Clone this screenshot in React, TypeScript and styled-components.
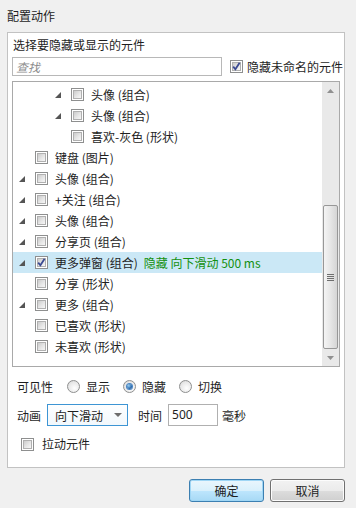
import React from 'react'
import styled, { createGlobalStyle } from 'styled-components'

const GlobalStyle = createGlobalStyle`
  body {
    margin: 0;
    background: #f0f0f0;
    font-family: "Noto Sans CJK SC", "Noto Sans", sans-serif;
    font-size: 12px;
    color: #1e1e1e;
  }
`

const Dialog = styled.div`
  width: 356px;
  height: 508px;
  box-sizing: border-box;
  display: flex;
  flex-direction: column;
`

const Title = styled.div`
  height: 32px;
  line-height: 32px;
  padding-left: 7px;
`

const Panel = styled.div`
  margin: 0 11px 0 7px;
  height: 436px;
  box-sizing: border-box;
  background: #fff;
  border: 1px solid #c2c2c2;
  padding: 3px 4px 0 4px;
  display: flex;
  flex-direction: column;
`

const Label = styled.div`
  line-height: 18px;
  height: 18px;
  padding-left: 1px;
`

const SearchRow = styled.div`
  display: flex;
  align-items: center;
  margin-top: 3px;
  height: 19px;
  white-space: nowrap;
`

const SearchInput = styled.div`
  width: 210px;
  height: 19px;
  flex-shrink: 0;
  box-sizing: border-box;
  border: 1px solid #b8b8b8;
  color: #8d8d8d;
  font-style: italic;
  padding-left: 3px;
  line-height: 17px;
`

const CheckLabel = styled.label<{ $gap?: number }>`
  display: flex;
  align-items: center;
  gap: ${p => p.$gap ?? 5}px;
  line-height: 16px;
  white-space: nowrap;
  flex-shrink: 0;
`

const BoxWrap = styled.span`
  width: 13px;
  height: 13px;
  box-sizing: border-box;
  border: 1px solid #8e8f8f;
  background: #fff;
  padding: 1px;
  display: inline-flex;
  flex-shrink: 0;
`

const BoxInner = styled.span`
  flex: 1;
  background: linear-gradient(135deg, #cbcbcb 0%, #e6e6e6 55%, #f6f6f6 100%);
  border: 1px solid #b0b0b0;
  position: relative;
`

const Check = ({ checked }: { checked?: boolean }) => (
  <BoxWrap>
    <BoxInner>
      {checked && (
        <svg width="11" height="11" viewBox="0 0 11 11" style={{ position: 'absolute', left: -2, top: -2 }}>
          <path d="M2.2 5.6 L4.4 8.3 L8.6 1.8" fill="none" stroke="#3b4a92" strokeWidth="1.8" />
        </svg>
      )}
    </BoxInner>
  </BoxWrap>
)

const TreeBox = styled.div`
  margin-top: 5px;
  height: 286px;
  box-sizing: border-box;
  border: 1px solid #a9a9a9;
  display: flex;
`

const List = styled.div`
  flex: 1;
  padding-top: 2px;
  overflow: hidden;
`

const Row = styled.div<{ $level: number; $selected?: boolean }>`
  height: 21px;
  display: flex;
  align-items: center;
  padding-left: ${p => 22 + p.$level * 18}px;
  background: ${p => (p.$selected ? '#cbe8f6' : 'transparent')};
  position: relative;
  white-space: nowrap;
`

const Expander = styled.svg`
  position: absolute;
  margin-left: -16px;
`

const RowText = styled.span`
  margin-left: 7px;
  line-height: 16px;
`

const Note = styled.span`
  margin-left: 6px;
  color: #14900f;
  line-height: 16px;
`

const ScrollBar = styled.div`
  width: 17px;
  background: #e9e9e9;
  display: flex;
  flex-direction: column;
  align-items: center;
`

const ArrowCell = styled.div`
  height: 17px;
  width: 17px;
  display: flex;
  align-items: center;
  justify-content: center;
`

const Thumb = styled.div`
  margin-top: auto;
  width: 15px;
  height: 144px;
  box-sizing: border-box;
  border: 1px solid #979797;
  border-radius: 2px;
  background: linear-gradient(90deg, #f4f4f4 0%, #e6e6e6 50%, #d5d5d5 100%);
  display: flex;
  align-items: center;
  justify-content: center;
`

const Grip = styled.div`
  width: 7px;
  height: 7px;
  background: repeating-linear-gradient(180deg, #6e6e6e 0 1px, transparent 1px 2px);
`

const Options = styled.div`
  padding: 9px 0 0 5px;
  display: flex;
  flex-direction: column;
`

const OptionRow = styled.div<{ $h: number; $mt?: number }>`
  display: flex;
  align-items: center;
  height: ${p => p.$h}px;
  margin-top: ${p => p.$mt ?? 0}px;
`

const Radio = styled.span<{ $on?: boolean }>`
  width: 13px;
  height: 13px;
  box-sizing: border-box;
  border-radius: 50%;
  border: 1px solid #8e8f8f;
  background: radial-gradient(circle at 60% 65%, #ffffff 0%, #e8e8e8 60%, #d0d0d0 100%);
  display: inline-flex;
  align-items: center;
  justify-content: center;
  &::after {
    content: '';
    display: ${p => (p.$on ? 'block' : 'none')};
    width: 5px;
    height: 5px;
    border-radius: 50%;
    background: radial-gradient(circle at 35% 35%, #9ad0f2 0%, #2a6cb0 60%, #1b3f77 100%);
    box-shadow: 0 0 0 1px #4a86c5;
  }
`

const RadioOption = styled.label`
  display: flex;
  align-items: center;
  gap: 6px;
  margin-left: 14px;
  & + & {
    margin-left: 13px;
  }
`

const Select = styled.div`
  margin-left: 6px;
  width: 81px;
  height: 22px;
  box-sizing: border-box;
  border: 1px solid #3d95d4;
  background: linear-gradient(180deg, #fdfeff 0%, #f2f8fc 100%);
  display: flex;
  align-items: center;
  padding-left: 7px;
`

const SelectArrow = styled.span`
  margin-left: auto;
  margin-right: 5px;
  width: 0;
  height: 0;
  border-left: 4px solid transparent;
  border-right: 4px solid transparent;
  border-top: 4px solid #6d6d6d;
`

const Field = styled.div`
  margin-left: 6px;
  width: 50px;
  height: 22px;
  box-sizing: border-box;
  border: 1px solid #b0b0b0;
  padding-left: 3px;
  line-height: 20px;
  font-family: "Noto Sans", "Noto Sans CJK SC", sans-serif;
`

const Gap = styled.span<{ $w: number }>`
  display: inline-block;
  flex-shrink: 0;
  width: ${p => p.$w}px;
`

const Footer = styled.div`
  display: flex;
  justify-content: flex-end;
  gap: 6px;
  padding: 11px 11px 0 0;
`

const Button = styled.button<{ $primary?: boolean }>`
  width: 75px;
  height: 23px;
  box-sizing: border-box;
  border-radius: 3px;
  font: inherit;
  color: #1e1e1e;
  padding: 0;
  border: 1px solid ${p => (p.$primary ? '#3c7fb1' : '#707070')};
  background: ${p =>
    p.$primary
      ? 'linear-gradient(180deg, #eaf6fd 0%, #d9f0fc 50%, #bee6fd 51%, #a7d9f5 100%)'
      : 'linear-gradient(180deg, #f2f2f2 0%, #ebebeb 50%, #dddddd 51%, #cfcfcf 100%)'};
  box-shadow: inset 0 0 0 1px ${p => (p.$primary ? '#9fd6f5' : '#fcfcfc')};
`

type Item = {
  text: string
  level: number
  expandable?: boolean
  checked?: boolean
  selected?: boolean
  note?: string
}

const items: Item[] = [
  { text: '头像 (组合)', level: 2, expandable: true },
  { text: '头像 (组合)', level: 2, expandable: true },
  { text: '喜欢-灰色 (形状)', level: 2 },
  { text: '键盘 (图片)', level: 0 },
  { text: '头像 (组合)', level: 0, expandable: true },
  { text: '+关注 (组合)', level: 0, expandable: true },
  { text: '头像 (组合)', level: 0, expandable: true },
  { text: '分享页 (组合)', level: 0, expandable: true },
  { text: '更多弹窗 (组合)', level: 0, expandable: true, checked: true, selected: true, note: '隐藏 向下滑动 500 ms' },
  { text: '分享 (形状)', level: 0 },
  { text: '更多 (组合)', level: 0, expandable: true },
  { text: '已喜欢 (形状)', level: 0 },
  { text: '未喜欢 (形状)', level: 0 },
]

const App: React.FC = () => (
  <Dialog>
    <GlobalStyle />
    <Title>配置动作</Title>
    <Panel>
      <Label>选择要隐藏或显示的元件</Label>
      <SearchRow>
        <SearchInput>查找</SearchInput>
        <Gap $w={8} />
        <CheckLabel $gap={4}>
          <Check checked />
          隐藏未命名的元件
        </CheckLabel>
      </SearchRow>
      <TreeBox>
        <List>
          {items.map((it, i) => (
            <Row key={i} $level={it.level} $selected={it.selected}>
              {it.expandable && (
                <Expander width="6" height="6" viewBox="0 0 6 6">
                  <polygon points="6,0 6,6 0,6" fill="#555" />
                </Expander>
              )}
              <Check checked={it.checked} />
              <RowText>{it.text}</RowText>
              {it.note && <Note>{it.note}</Note>}
            </Row>
          ))}
        </List>
        <ScrollBar>
          <ArrowCell>
            <svg width="7" height="4" viewBox="0 0 7 4">
              <polygon points="3.5,0 7,4 0,4" fill="#909090" />
            </svg>
          </ArrowCell>
          <Thumb>
            <Grip />
          </Thumb>
          <ArrowCell>
            <svg width="7" height="4" viewBox="0 0 7 4">
              <polygon points="0,0 7,0 3.5,4" fill="#909090" />
            </svg>
          </ArrowCell>
        </ScrollBar>
      </TreeBox>
      <Options>
        <OptionRow $h={20}>
          可见性
          <RadioOption>
            <Radio />
            显示
          </RadioOption>
          <RadioOption>
            <Radio $on />
            隐藏
          </RadioOption>
          <RadioOption>
            <Radio />
            切换
          </RadioOption>
        </OptionRow>
        <OptionRow $h={22} $mt={8}>
          动画
          <Select>
            向下滑动
            <SelectArrow />
          </Select>
          <Gap $w={10} />
          时间
          <Field>500</Field>
          <Gap $w={4} />
          毫秒
        </OptionRow>
        <OptionRow $h={16} $mt={10}>
          <Gap $w={4} />
          <CheckLabel $gap={8}>
            <Check />
            拉动元件
          </CheckLabel>
        </OptionRow>
      </Options>
    </Panel>
    <Footer>
      <Button $primary>确定</Button>
      <Button>取消</Button>
    </Footer>
  </Dialog>
)

export default App
